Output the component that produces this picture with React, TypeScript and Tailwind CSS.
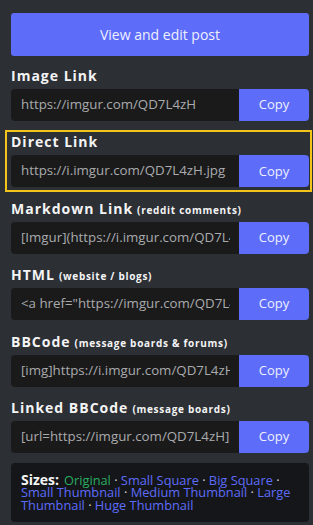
import React from 'react';

const links = [
  { label: 'Image Link', note: '', value: 'https://imgur.com/QD7L4zH' },
  { label: 'Direct Link', note: '', value: 'https://i.imgur.com/QD7L4zH.jpg', active: true },
  { label: 'Markdown Link', note: '(reddit comments)', value: '[Imgur](https://i.imgur.com/QD7L4zH.jpg)' },
  { label: 'HTML', note: '(website / blogs)', value: '<a href="https://imgur.com/QD7L4zH"><img src="https://i.imgur.com/QD7L4zH.jpg" /></a>' },
  { label: 'BBCode', note: '(message boards & forums)', value: '[img]https://i.imgur.com/QD7L4zH.jpg[/img]' },
  { label: 'Linked BBCode', note: '(message boards)', value: '[url=https://imgur.com/QD7L4zH][img]https://i.imgur.com/QD7L4zH.jpg[/img][/url]' },
];

const sizes = ['Original', 'Small Square', 'Big Square', 'Small Thumbnail', 'Medium Thumbnail', 'Large Thumbnail', 'Huge Thumbnail'];

const App = () => {
  return (
    <div
      className="w-[313px] h-[525px] bg-[#2c2f34] pl-[11px] pr-[4px] pt-[13px] overflow-hidden"
      style={{ fontFamily: '"Open Sans", sans-serif' }}
    >
      <button className="w-full h-[43px] rounded-[3px] bg-[#5d6cf9] text-[14px] text-[#eef0ff]">
        View and edit post
      </button>

      <div className="mt-[9px] flex flex-col gap-[10.4px]">
        {links.map((link) => (
          <div key={link.label} className="relative">
            {link.active && (
              <div className="absolute -left-[6px] -right-[3px] -top-[1px] -bottom-[5px] border-2 border-[#f3c51b] pointer-events-none" />
            )}
            <div className="h-[20px] leading-[20px] text-[#f4f4f4] whitespace-nowrap">
              <span className="text-[14px] font-bold tracking-[1px]">{link.label}</span>
              {link.note && (
                <span className="ml-[4px] text-[10px] font-bold tracking-[0.7px]">{link.note}</span>
              )}
            </div>
            <div className="mt-[4px] flex h-[32px] rounded-[4px] overflow-hidden">
              <input
                readOnly
                value={link.value}
                className="flex-1 min-w-0 bg-[#1a1a1b] pl-[10px] pr-[9px] text-[13.3px] text-[#a9abad] outline-none"
                style={{ fontFamily: '"Open Sans", sans-serif' }}
              />
              <button className="w-[70px] shrink-0 bg-[#5d6cf9] text-[13px] text-[#eef0ff]">Copy</button>
            </div>
          </div>
        ))}
      </div>

      <div className="mt-[10px] h-[59px] rounded-[4px] bg-[#151619] pl-[10px] pr-[6px] pt-[11px] text-[12.8px] leading-[12.5px]">
        <span className="text-[14px] font-bold text-[#f4f4f4] mr-[5px]">Sizes:</span>
        {sizes.map((s, i) => (
          <React.Fragment key={s}>
            {i > 0 && <span className="text-[#d8d8d8]"> · </span>}
            <span className={i === 0 ? 'text-[#27ae60]' : 'text-[#5d6cf9]'}>{s}</span>
          </React.Fragment>
        ))}
      </div>
    </div>
  );
};

export default App;
